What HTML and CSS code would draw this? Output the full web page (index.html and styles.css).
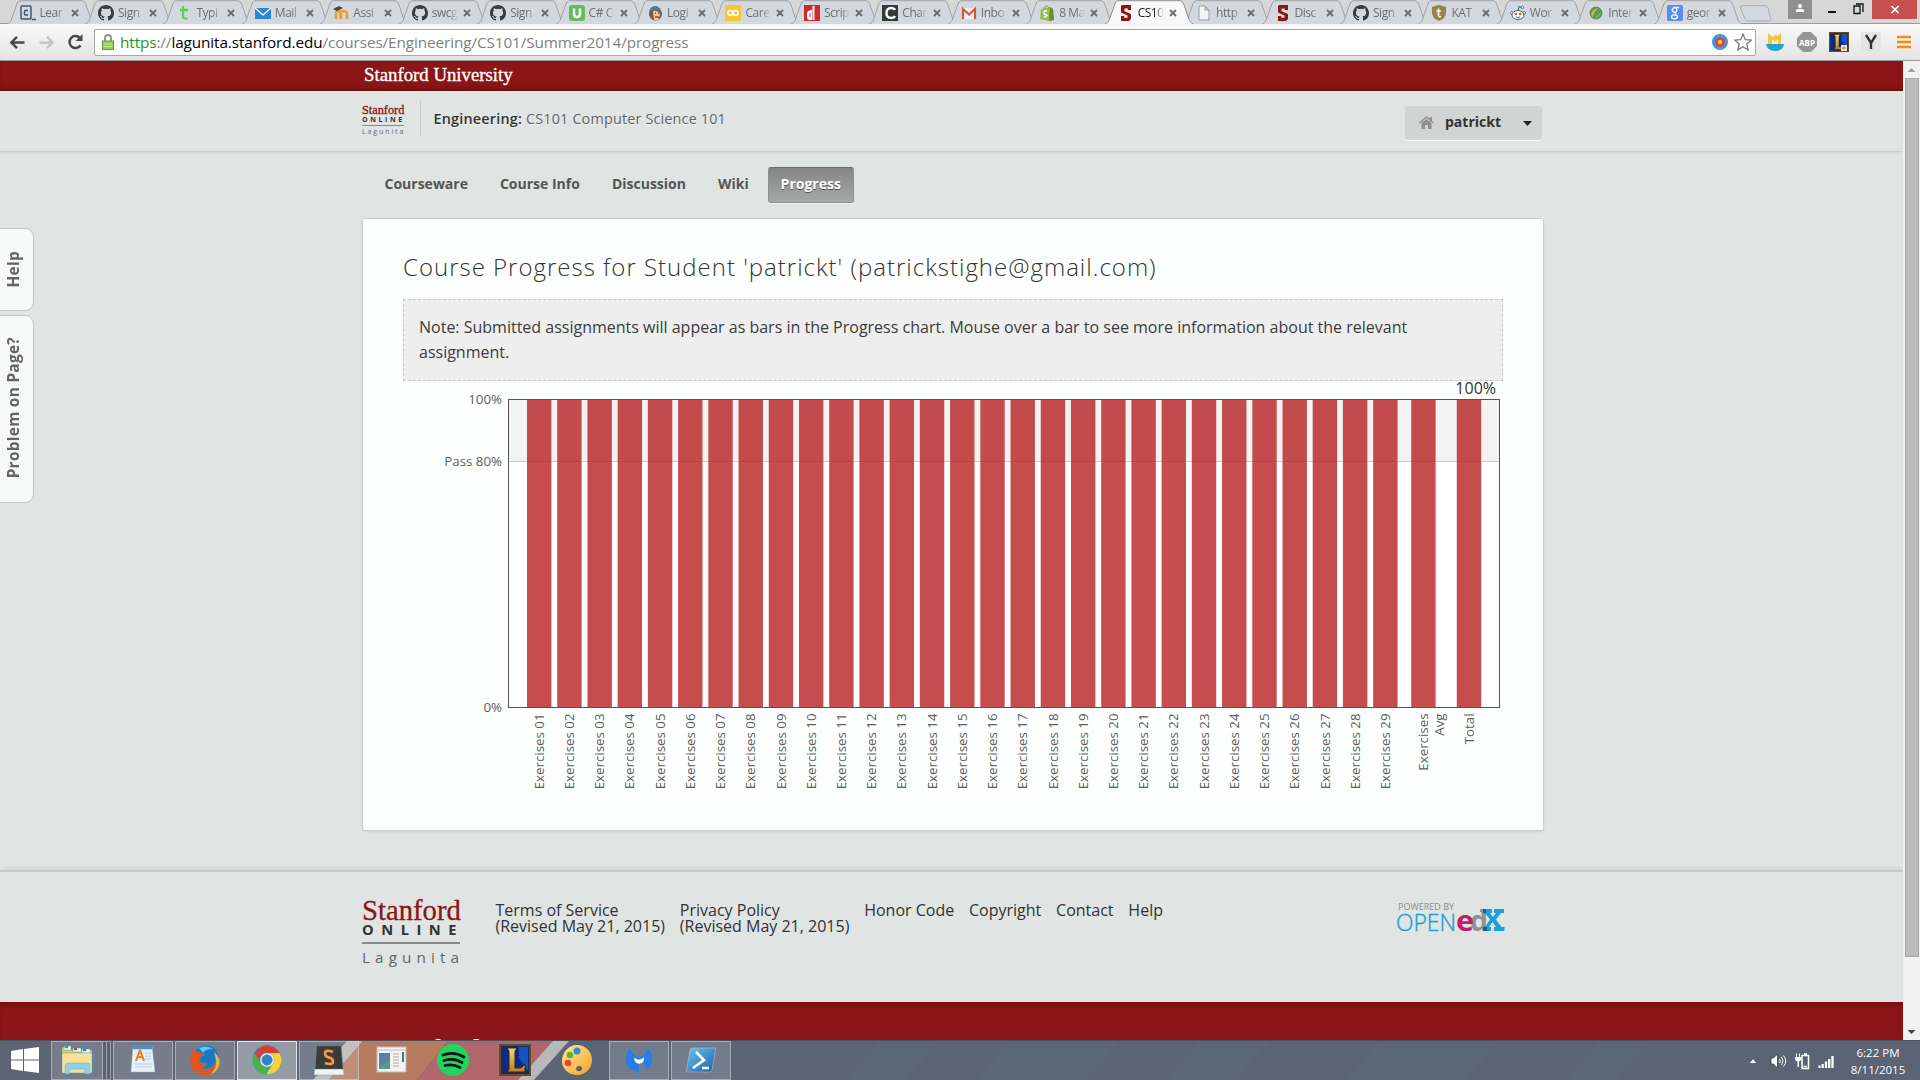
FILE: index.html
```html
<!DOCTYPE html>
<html lang="en">
<head>
<meta charset="utf-8">
<title>CS101 Progress</title>
<link rel="stylesheet" href="styles.css">
</head>
<body>
<svg class="defs" aria-hidden="true">
  <defs>
    <linearGradient id="gold" x1="0" y1="0" x2="0" y2="1"><stop offset="0" stop-color="#f3d77a"/><stop offset="1" stop-color="#b9812a"/></linearGradient>
    <linearGradient id="palette-fill" x1="0" y1="0" x2="1" y2="1"><stop offset="0" stop-color="#ffe9a0"/><stop offset="1" stop-color="#f3a21f"/></linearGradient>
    <linearGradient id="ps-fill" x1="0" y1="0" x2="1" y2="1"><stop offset="0" stop-color="#6fc0ea"/><stop offset="1" stop-color="#1766a8"/></linearGradient>
    <symbol id="tab" viewBox="0 0 89 24"><path d="M0 24C3 23 4 21 5 18L9.500 5C10.500 2 11.500 .7 14 .7H74C77 .7 78 2 79 5L83.500 18C84.500 21 85.500 23 88.500 24"/></symbol>
    <symbol id="close" viewBox="0 0 8 8"><path d="M1 1L7 7M7 1L1 7" fill="none" stroke="#6b6b6b" stroke-width="1.800"/></symbol>
    <symbol id="github" viewBox="0 0 16 16"><path fill="#3b3b3b" d="M8 0C3.580 0 0 3.580 0 8c0 3.540 2.290 6.530 5.470 7.590.4.070.55-.17.55-.38v-1.490c-2.010.37-2.530-.49-2.690-.94-.09-.23-.48-.94-.82-1.130-.28-.15-.68-.52-.01-.53.63-.01 1.080.58 1.230.82.72 1.210 1.870.87 2.330.66.070-.52.28-.87.510-1.070-1.780-.2-3.640-.89-3.640-3.950 0-.87.31-1.590.82-2.150-.08-.2-.36-1.020.080-2.120 0 0 .67-.21 2.200.82a7.600 7.600 0 0 1 4 0c1.530-1.040 2.200-.82 2.200-.82.440 1.100.160 1.920.080 2.120.51.560.82 1.270.82 2.150 0 3.070-1.870 3.750-3.650 3.950.29.25.54.73.54 1.480v2.200c0 .21.150.46.550.38A8 8 0 0 0 16 8c0-4.420-3.580-8-8-8z"/></symbol>
    <symbol id="stanford" viewBox="0 0 16 16"><path fill="#8c1515" d="M4 0h9v5H9.800V3.500H6.500v2.800L13 9v5l-2 2H3v-5h3.200v1.700h3.300V10.500L3 7.500V1z"/></symbol>
    <symbol id="league" viewBox="0 0 32 32"><rect width="32" height="32" fill="#6b4a16"/><rect x="2" y="2" width="28" height="28" fill="#0a2a86"/><path d="M20 3h9v24L20 14z" fill="#1553c4"/><path d="M8 4h10l-2 3v17h6l4-4v8H8l2-3V7z" fill="url(#gold)" stroke="#3a2606"/></symbol>
  </defs>
</svg>

<header class="tabstrip">
  <div class="tabs">
    <div class="tab"><svg class="shape"><use href="#tab"/></svg><svg class="fav" viewBox="0 0 16 16"><rect x="1" y="1" width="10" height="13" rx="1" fill="none" stroke="#3f5a6b" stroke-width="1.500"/><path d="M8 5.500H5.500Q4.500 5.500 4.500 7v2q0 1 1 1H8M12 14.500h4" stroke="#3f5a6b" stroke-width="1.500" fill="none"/></svg><span>Lear</span><svg class="x"><use href="#close"/></svg></div>
    <div class="tab"><svg class="shape"><use href="#tab"/></svg><svg class="fav"><use href="#github"/></svg><span>Sign</span><svg class="x"><use href="#close"/></svg></div>
    <div class="tab"><svg class="shape"><use href="#tab"/></svg><svg class="fav" viewBox="0 0 16 16"><path d="M7 1v10.500q0 2.500 4.500 2M4 5h8" fill="none" stroke="#5fcf50" stroke-width="2.400"/></svg><span>Typi</span><svg class="x"><use href="#close"/></svg></div>
    <div class="tab"><svg class="shape"><use href="#tab"/></svg><svg class="fav" viewBox="0 0 16 16"><rect y="3" width="16" height="11" fill="#2e86cf"/><path d="M0 3l8 7 8-7" fill="none" stroke="#fff" stroke-width="1.300"/></svg><span>Mail</span><svg class="x"><use href="#close"/></svg></div>
    <div class="tab"><svg class="shape"><use href="#tab"/></svg><svg class="fav" viewBox="0 0 16 16"><path d="M3 14V8q0-2 2-2t2.500 2v6M8 14V8q0-2 2.500-2T14 8v6" fill="none" stroke="#ef9b2d" stroke-width="2.600"/><path d="M0 4l6-3 4 2-6 3z" fill="#444"/></svg><span>Assi</span><svg class="x"><use href="#close"/></svg></div>
    <div class="tab"><svg class="shape"><use href="#tab"/></svg><svg class="fav"><use href="#github"/></svg><span>swcg</span><svg class="x"><use href="#close"/></svg></div>
    <div class="tab"><svg class="shape"><use href="#tab"/></svg><svg class="fav"><use href="#github"/></svg><span>Sign</span><svg class="x"><use href="#close"/></svg></div>
    <div class="tab"><svg class="shape"><use href="#tab"/></svg><svg class="fav" viewBox="0 0 16 16"><rect width="16" height="16" rx="3" fill="#62bb5d"/><path d="M5 3.500V9q0 3 3 3t3-3V3.500" fill="none" stroke="#fff" stroke-width="2.400"/></svg><span>C# C</span><svg class="x"><use href="#close"/></svg></div>
    <div class="tab"><svg class="shape"><use href="#tab"/></svg><svg class="fav" viewBox="0 0 16 16"><circle cx="8.500" cy="9" r="6.500" fill="#7a5844"/><path d="M6 6q6-1 7 4l-2 5H7z" fill="#e8c6a0"/><path d="M2 7Q3 0 10 1l4 3-8 1z" fill="#3c82b4"/><path d="M8 8h1M11 8h1M8 12h4" stroke="#3c281e"/></svg><span>Logi</span><svg class="x"><use href="#close"/></svg></div>
    <div class="tab"><svg class="shape"><use href="#tab"/></svg><svg class="fav" viewBox="0 0 16 16"><rect width="16" height="16" rx="1" fill="#f7c52d"/><circle cx="5.300" cy="8" r="2.400" fill="none" stroke="#fff" stroke-width="1.500"/><circle cx="10.700" cy="8" r="2.400" fill="none" stroke="#fff" stroke-width="1.500"/></svg><span>Care</span><svg class="x"><use href="#close"/></svg></div>
    <div class="tab"><svg class="shape"><use href="#tab"/></svg><svg class="fav" viewBox="0 0 16 16"><rect width="16" height="16" fill="#cf2a2a"/><path d="M9.500 1v14M6 6.500q-2 0-2 2.500v3q0 2 2 2h1V6z" stroke="#fff" stroke-width="2" fill="#fff"/><path d="M6 8v4" stroke="#cf2a2a"/></svg><span>Scrip</span><svg class="x"><use href="#close"/></svg></div>
    <div class="tab"><svg class="shape"><use href="#tab"/></svg><svg class="fav" viewBox="0 0 16 16"><rect width="16" height="16" fill="#333a38"/><path d="M13 5Q12 3 9 3 4.500 3 4.500 8T9 13q3 0 4-2" stroke="#fff" stroke-width="2.400" fill="none"/></svg><span>Char</span><svg class="x"><use href="#close"/></svg></div>
    <div class="tab"><svg class="shape"><use href="#tab"/></svg><svg class="fav" viewBox="0 0 16 16"><rect x="1" y="3" width="14" height="11" fill="#f0f0f0"/><path d="M2 14V4l6 5.500L14 4v10" stroke="#d65445" stroke-width="2.200" fill="none"/></svg><span>Inbo</span><svg class="x"><use href="#close"/></svg></div>
    <div class="tab"><svg class="shape"><use href="#tab"/></svg><svg class="fav" viewBox="0 0 16 16"><path d="M2 4l9-2 3 2 1 11-5 1-9-2z" fill="#95bf47"/><path d="M11 2l3 2 1 11-5 1z" fill="#5e8e3e"/><path d="M5 4q1-4 3-3t2 3" fill="none" stroke="#7aa63a"/><path d="M8 6Q5 5 5 7.500T7.500 10 5 12.500" stroke="#fff" stroke-width="1.400" fill="none"/></svg><span>8 Ma</span><svg class="x"><use href="#close"/></svg></div>
    <div class="tab active"><svg class="shape"><use href="#tab"/></svg><svg class="fav"><use href="#stanford"/></svg><span>CS10</span><svg class="x"><use href="#close"/></svg></div>
    <div class="tab"><svg class="shape"><use href="#tab"/></svg><svg class="fav" viewBox="0 0 16 16"><path d="M3 1h6l4 4v10H3zM9 1v4h4" fill="#f4f4f4" stroke="#999"/></svg><span>http</span><svg class="x"><use href="#close"/></svg></div>
    <div class="tab"><svg class="shape"><use href="#tab"/></svg><svg class="fav"><use href="#stanford"/></svg><span>Disc</span><svg class="x"><use href="#close"/></svg></div>
    <div class="tab"><svg class="shape"><use href="#tab"/></svg><svg class="fav"><use href="#github"/></svg><span>Sign</span><svg class="x"><use href="#close"/></svg></div>
    <div class="tab"><svg class="shape"><use href="#tab"/></svg><svg class="fav" viewBox="0 0 16 16"><path d="M1 2l3-1 4-1 4 1 3 1v6q0 5-7 8-7-3-7-8z" fill="#95834a"/><path d="M7.500 3.500v7q0 1.500 2.500 1M5.500 6H10" stroke="#fff" stroke-width="1.600" fill="none"/></svg><span>KAT</span><svg class="x"><use href="#close"/></svg></div>
    <div class="tab"><svg class="shape"><use href="#tab"/></svg><svg class="fav" viewBox="0 0 16 16"><rect width="16" height="16" fill="#c3dcf2"/><circle cx="2" cy="8" r="1.500" fill="#fff" stroke="#444" stroke-width=".6"/><circle cx="14" cy="8" r="1.500" fill="#fff" stroke="#444" stroke-width=".6"/><ellipse cx="8" cy="10" rx="6" ry="4.500" fill="#fff" stroke="#333" stroke-width=".8"/><circle cx="5.800" cy="9" r="1.300" fill="#f04a22"/><circle cx="10.200" cy="9" r="1.300" fill="#f04a22"/><path d="M8 5.500l1-4 3 1M6 12q2 1 4 0" stroke="#333" stroke-width=".8" fill="none"/><circle cx="12.500" cy="2.500" r="1.200" fill="#fff" stroke="#333" stroke-width=".6"/></svg><span>Wor</span><svg class="x"><use href="#close"/></svg></div>
    <div class="tab"><svg class="shape"><use href="#tab"/></svg><svg class="fav" viewBox="0 0 16 16"><circle cx="8" cy="8" r="6.500" fill="#4c9e5b"/><path d="M3 10Q5 3 11 3q-5 3-6 9zM6 13q6-1 7-6-3 4-7 6z" fill="#e8a94a"/></svg><span>Inter</span><svg class="x"><use href="#close"/></svg></div>
    <div class="tab"><svg class="shape"><use href="#tab"/></svg><svg class="fav" viewBox="0 0 16 16"><rect width="16" height="16" rx="1.500" fill="#5a8dee"/><circle cx="7.500" cy="5" r="2.300" fill="none" stroke="#fff" stroke-width="1.300"/><ellipse cx="7.500" cy="11.800" rx="3" ry="2" fill="none" stroke="#fff" stroke-width="1.300"/><path d="M8 7.500l1 2M8.500 2.500H12" stroke="#fff" stroke-width="1.300"/></svg><span>geor</span><svg class="x"><use href="#close"/></svg></div>
  </div>
  <svg class="newtab" viewBox="0 0 33 17"><path d="M4 .7h22q2 0 3 2l3 11q.5 2.300-2 2.300H9q-2 0-3-2L1.500 3Q1 .7 4 .7z" fill="#d3d8df" stroke="#a9acb0"/></svg>
  <div class="window-buttons">
    <svg class="person" viewBox="0 0 24 19"><rect width="24" height="19" fill="#8f8f8f"/><circle cx="12" cy="6" r="2" fill="#fff"/><path d="M8 12V10q4-2.500 8 0v2z" fill="#fff"/></svg>
    <svg class="minimize" viewBox="0 0 8 19"><path d="M0 12h8" stroke="#111" stroke-width="2"/></svg>
    <svg class="restore" viewBox="0 0 11 19"><path d="M1 6h6v7.500H1zM3 4h7v8" fill="none" stroke="#111" stroke-width="1.300"/></svg>
    <svg class="quit" viewBox="0 0 45 19"><rect width="45" height="19" fill="#c75050"/><path d="M19.500 6l7 7M26.500 6l-7 7" stroke="#fff" stroke-width="1.700"/></svg>
  </div>
</header>

<div class="toolbar">
  <svg class="nav-icon" viewBox="0 0 16 16"><path d="M16 8H2M8 2L2 8l6 6" fill="none" stroke="#484848" stroke-width="2.600"/></svg>
  <svg class="nav-icon fwd" viewBox="0 0 16 16"><path d="M0 8h14M8 2l6 6-6 6" fill="none" stroke="#c3c3c3" stroke-width="2.400"/></svg>
  <svg class="nav-icon reload" viewBox="0 0 16 16"><path d="M13 11.500A6 6 0 1 1 12.500 4" fill="none" stroke="#484848" stroke-width="2.500"/><path d="M15 0v7H8z" fill="#484848"/></svg>
  <div class="omnibox">
    <svg class="lock" viewBox="0 0 12 16"><path d="M3 8V4q0-3 3-3t3 3v4" fill="none" stroke="#8b8b8b" stroke-width="1.800"/><rect x=".5" y="7" width="11" height="8.500" fill="#8fd45c" stroke="#5a9d33"/><path d="M2 10h8M2 12.500h8" stroke="#b8ea93"/></svg>
    <span class="url"><b>https</b>://<em>lagunita.stanford.edu</em>/courses/Engineering/CS101/Summer2014/progress</span>
    <svg class="target" viewBox="0 0 16 16"><circle cx="8" cy="8" r="8" fill="#3f98e0"/><circle cx="8" cy="8" r="5" fill="#e0463c"/><circle cx="8" cy="8" r="2" fill="#ffe43b"/></svg>
    <svg class="star" viewBox="0 0 18 18"><path d="M9 1l2.300 5.700 6 .4-4.600 3.900 1.500 6L9 13.700 3.800 17l1.500-6L.7 7.100l6-.4z" fill="#fff" stroke="#757575" stroke-width="1.200"/></svg>
  </div>
  <div class="extensions">
    <svg viewBox="0 0 20 20"><path d="M3 12V1l4.500 4L10 3l2.500 1L16 1v11z" fill="#f8c33a"/><path d="M7 12V7.500l3 2 3-2V12z" fill="#fff3cf"/><path d="M1 12h18q-1 7-9 7t-9-7z" fill="#1fa5d5"/></svg>
    <svg viewBox="0 0 20 20"><path d="M6 0h8l6 6v8l-6 6H6l-6-6V6z" fill="#969696"/><text x="10" y="13.500" class="abp">ABP</text></svg>
    <svg viewBox="0 0 20 20"><use href="#league"/><rect x="12" y="13" width="6" height="6" fill="#e9eef5"/><circle cx="15" cy="16" r="1.700" fill="#e98a58"/></svg>
    <svg viewBox="0 0 20 20"><rect width="20" height="20" fill="#e4e4e4"/><path d="M5 3l5 8 5-8M10 10v7" fill="none" stroke="#333" stroke-width="2.400"/></svg>
    <svg class="menu" viewBox="0 0 14 14"><path d="M0 2h14M0 7h14M0 12h14" stroke="#ef8f1a" stroke-width="2.600"/></svg>
  </div>
</div>

<div class="viewport">
  <div class="page">
    <div class="brandbar"><span class="su">Stanford University</span></div>
    <div class="course-header">
      <div class="logo small"><i>Stanford</i><b>ONLINE</b><hr><span>Lagunita</span></div>
      <div class="course-name"><strong>Engineering:</strong> CS101 Computer Science 101</div>
      <div class="user">
        <svg class="home" viewBox="0 0 15 13"><path d="M7.500 0L0 6.500l1 1L7.500 2l6.500 5.500 1-1-2-1.800V1h-2v1.800z"/><path d="M7.500 3L2.500 7.300V13H6V9h3v4h3.500V7.300z"/></svg>
        <span>patrickt</span>
        <svg class="caret" viewBox="0 0 9 5"><path d="M0 0h9L4.500 5z"/></svg>
      </div>
    </div>
    <nav class="course-nav"><a>Courseware</a><a>Course Info</a><a>Discussion</a><a>Wiki</a><a class="current">Progress</a></nav>
    <main class="card">
      <h1>Course Progress for Student 'patrickt' (patrickstighe@gmail.com)</h1>
      <p class="note">Note: Submitted assignments will appear as bars in the Progress chart. Mouse over a bar to see more information about the relevant assignment.</p>
      <svg id="chart" class="chart" width="1100" height="430" viewBox="403 381 1100 430"></svg>
    </main>
    <footer class="footer">
      <div class="logo large"><i>Stanford</i><b>ONLINE</b><hr><span>Lagunita</span></div>
      <div class="links">
        <a>Terms of Service<br>(Revised May 21, 2015)</a><a>Privacy Policy<br>(Revised May 21, 2015)</a><a>Honor Code</a><a>Copyright</a><a>Contact</a><a>Help</a>
      </div>
      <svg class="edx" viewBox="0 0 108 30">
        <text x="1" y="7" class="pow" textLength="56" lengthAdjust="spacingAndGlyphs">POWERED BY</text>
        <text x="-1" y="28" class="open" textLength="60" lengthAdjust="spacingAndGlyphs">OPEN</text>
        <text x="73" y="28" class="ed d" textLength="18" lengthAdjust="spacingAndGlyphs">d</text>
        <text x="59" y="28" class="ed e" textLength="18" lengthAdjust="spacingAndGlyphs">e</text>
        <path d="M86 6h9v4h-2l3 4 3-4h-2V6h10v4h-3l-5 6.500 5.500 7.500h3v4H97v-4h2l-3.500-5-3.500 5h2v4h-8v-4h2l5-7.500L88 10h-2z" fill="#1f9fd8"/>
        <path d="M83 6h4v3h-4z" fill="#8f9194"/><path d="M86 6h3v4h-3zM86 24h4v4h-4z" fill="#1a5e96"/>
      </svg>
    </footer>
    <div class="bottombar"><span>Stanford</span></div>
    <aside class="side-tabs"><div class="help"><span>Help</span></div><div class="problem"><span>Problem on Page?</span></div></aside>
  </div>
  <div class="scrollbar">
    <svg viewBox="0 0 17 17"><path d="M4.500 11h8l-4-4z" fill="#a0a0a0"/></svg>
    <div class="thumb"></div>
    <svg class="down" viewBox="0 0 17 17"><path d="M4.500 7h8l-4 4z" fill="#444"/></svg>
  </div>
</div>

<div class="taskbar">
  <svg class="wallpaper" viewBox="0 0 1920 40" preserveAspectRatio="none">
    <rect width="1920" height="40" fill="#5a6475"/>
    <path d="M0 0h300l-35 40H0z" fill="#5c6474"/>
    <path d="M347 0h16l-35 40h-16z" fill="#b9b4b1"/>
    <path d="M363 0h85l-32 40h-88z" fill="#b67a5e"/>
    <path d="M448 0h105l-36 40H416z" fill="#b0666b"/>
    <path d="M553 0h16l-36 40h-16z" fill="#b9b8b8"/>
    <path d="M880 0h60l-35 40h-60zM1010 0h110l-35 40H975zM1200 0h70l-35 40h-70zM1380 0h120l-35 40h-120zM1600 0h50l-35 40h-50z" fill="#59687b" opacity=".8"/>
  </svg>
  <div class="task start"><svg viewBox="0 0 28 26"><path d="M0 4l12-2v10.500H0zM13 1.900L28 0v12.500H13zM0 13.500h12V24L0 22zM13 13.500h15V26l-15-2z" fill="#fff"/></svg></div>
  <div class="task open explorer"><svg viewBox="0 0 32 32"><path d="M1 3h8l1 3h21v23H1z" fill="#e9c765"/><path d="M3 2h7v4H3zM12 4h8v4h-8zM21 5h8v4h-8z" fill="#f8f8f2"/><path d="M4 2h3v2H4z" fill="#45a83f"/><path d="M13 4h3v2h-3z" fill="#c03a30"/><path d="M22 5h3v2h-3z" fill="#3a78c8"/><path d="M1 9h30v20H1z" fill="#f7e296"/><path d="M4 30V22q0-3 3-3h19q3 0 3 3v8h-5v-5H9v5z" fill="#8fd0ea" stroke="#58a3cc"/></svg></div><div class="stack"></div><div class="stack"></div>
  <div class="task open wordpad"><svg viewBox="0 0 32 32"><path d="M6 2h19l3 26H4z" fill="#e8f1fb" stroke="#8bb2dc"/><path d="M6 2h19v3H6z" fill="#4d8ed1"/><path d="M9 17l4-11 4 11M10.500 13h5" fill="none" stroke="#ef7f1a" stroke-width="2"/><path d="M18 9h6M18 12h6M18 15h6M8 20h17M8 23h17" stroke="#5b93cf"/></svg></div>
  <div class="task open firefox"><svg viewBox="0 0 32 32"><circle cx="17" cy="14.500" r="13" fill="#1c76c4"/><path d="M10 4q8-3 14 1-8 0-10 4z" fill="#67c7f0"/><path d="M3 5q2 3 6 3 4 0 7 3-5 1-6 5 2 4 8 3-1 5-7 4 6 4 12 0 6-5 2-15 6 5 6 11-1 12-14 13Q3 31 1 19 1 10 3 5z" fill="#e2551b"/><path d="M25 8q6 5 6 11-2 9-10 12 7-7 6-15z" fill="#f8b42f"/></svg></div>
  <div class="task open front chrome"><svg viewBox="0 0 32 32"><circle cx="16" cy="16" r="14.500" fill="#4db149"/><path d="M16 16L3.500 8.700A14.500 14.500 0 0 1 28.600 8.900z" fill="#de3b2f"/><path d="M16 9h12.800A14.500 14.500 0 0 1 15 30.500L22 19z" fill="#fbd235"/><path d="M3.500 8.700L10 19l6-10z" fill="#de3b2f"/><circle cx="16" cy="16" r="7" fill="#fff"/><circle cx="16" cy="16" r="5.400" fill="#3b7fc4"/></svg></div>
  <div class="task open sublime"><svg viewBox="0 0 32 32"><path d="M4 5h24l3 26H1z" fill="#f2f2f2"/><path d="M4 2h24l2 23H2z" fill="#3b3b3b" stroke="#666"/><path d="M20 8q-8-3-8 1.500 0 3 4 4t4 4q0 4-8 1.500" fill="none" stroke="#ff9a3c" stroke-width="2.600"/></svg></div>
  <div class="task generic"><svg viewBox="0 0 32 32"><rect x="2" y="3" width="29" height="25" fill="#f4f4f4" stroke="#bbb"/><path d="M2 6h29" stroke="#bbc"/><rect x="4" y="9" width="11" height="16" fill="#579a82"/><path d="M4 9h11v7l-11 7z" fill="#5b80a8"/><path d="M18 10h6M18 13h6M18 16h6M18 19h6M18 22h6" stroke="#aaa"/><path d="M28 8v10" stroke="#3a7e6a" stroke-width="2"/></svg></div>
  <div class="task spotify"><svg viewBox="0 0 32 32"><circle cx="16" cy="16" r="16" fill="#1ed760"/><path d="M6 11q11-4 21 2M7 16.500q10-3 18 2M8 21.500q8-2 15 2" fill="none" stroke="#191414" stroke-width="2.800" stroke-linecap="round"/></svg></div>
  <div class="task lol"><svg viewBox="0 0 32 32"><use href="#league"/></svg></div>
  <div class="task paint"><svg viewBox="0 0 32 32"><path d="M16 1c9 0 15 7 15 15S25 31 16 31C8 31 1 25 1 17S7 1 16 1zm2 21a3 2.600 0 1 0 .1 0z" fill="url(#palette-fill)" fill-rule="evenodd"/><circle cx="16" cy="7" r="3.500" fill="#2d8fd0"/><circle cx="9" cy="11" r="3.300" fill="#5cb82e"/><circle cx="7" cy="19" r="3.300" fill="#e8432e"/></svg></div>
  <div class="task open mbam"><svg viewBox="0 0 32 32"><path d="M7 4q3 7 9 10 6-3 9-10 6 6 4 14-2 6-6 8l-3-9-4 4v8Q6 27 3 19 1 10 7 4z" fill="#2e7be0"/><path d="M11 13q5 5 10 0 1 6-5 7-5-1-5-7z" fill="#fff"/></svg></div>
  <div class="task open powershell"><svg viewBox="0 0 32 32"><path d="M7 4h22q2 0 1.500 2L27 26q-.5 2-2.500 2H3q-2 0-1.500-2L5 6q.5-2 2-2z" fill="url(#ps-fill)" stroke="#bfe0f5"/><path d="M11 8l8 8-11 8M17 24h7" fill="none" stroke="#fff" stroke-width="2.600"/></svg></div>
  <div class="tray">
    <svg class="up" viewBox="0 0 10 8"><path d="M1 6.500h8L5 1.500z" fill="#f4f4f4" stroke="#333b48" stroke-width=".6"/></svg>
    <svg class="sound" viewBox="0 0 17 16"><path d="M1 5h2.500L7.500 1v14l-4-4H1z" fill="#fff" stroke="#333b48" stroke-width=".8"/><path d="M9.500 6q1.500 2 0 4M11.500 4q3 4 0 8M13.500 2.500q4.500 5.500 0 11" fill="none" stroke="#fff"/></svg>
    <svg class="battery" viewBox="0 0 17 18"><path d="M9 3.500h5.500v13H8V3.500zM10 2h3" fill="none" stroke="#fff" stroke-width="1.500"/><path d="M1 5h6v3L5 9.500V15H3.500V9.500L1 8z" fill="#fff"/><path d="M2.500 5V1.500M5.500 5V1.500" stroke="#fff"/><path d="M9.500 14.500h3.500" stroke="#fff" stroke-width="1.500"/></svg>
    <svg class="signal" viewBox="0 0 17 14"><path d="M1.500 14v-2.500M4.700 14V10M8 14V7.500M11.200 14V5M14.500 14V2" stroke="#fff" stroke-width="2.300"/></svg>
    <div class="clock"><div>6:22 PM</div><div>8/11/2015</div></div>
  </div>
</div>
<script src="app.js"></script>
</body>
</html>
```
FILE: styles.css
```css
* { box-sizing: border-box; }
html, body { margin: 0; height: 100%; }
body { width: 1920px; height: 1080px; overflow: hidden; display: flex; flex-direction: column; font-family: "Open Sans", sans-serif; background: #e0e4e3; }
svg { display: block; flex: none; }
.defs { position: absolute; width: 0; height: 0; }

/* Browser chrome */
.tabstrip { height: 24px; flex: none; display: flex; background: #d7d7d7; border-bottom: 1px solid #9c9c9c; padding-left: 6.5px; }
.tabs { display: flex; flex: none; height: 24px; }
.tab { position: relative; width: 78.45px; height: 24px; flex: none; display: flex; align-items: center; padding: 2px 0 0 13px; font: 12px/16px "Open Sans", sans-serif; letter-spacing: -.45px; color: #6d7074; }
.tab .shape { position: absolute; left: 0; top: 0; width: 89px; height: 24px; fill: #d3d8df; stroke: #9fa1a5; }
.tab.active { z-index: 2; color: #222; }
.tab.active .shape { fill: #f8f8f8; stroke: #8f8f8f; }
.tab .fav { position: relative; width: 16px; height: 16px; margin-right: 4px; }
.tab span { position: relative; width: 26px; white-space: nowrap; -webkit-mask-image: linear-gradient(90deg, #000 65%, transparent); mask-image: linear-gradient(90deg, #000 65%, transparent); }
.tab .x { position: relative; width: 8px; height: 8px; margin-left: 5px; }
.newtab { width: 33px; height: 17px; margin: 5px 0 0 7px; }
.window-buttons { display: flex; margin-left: auto; padding-right: 3px; }
.window-buttons svg { height: 19px; }
.person { width: 24px; margin-right: 16px; }
.minimize { width: 8px; margin-right: 17px; }
.restore { width: 11px; margin-right: 8px; }
.quit { width: 45px; }
.toolbar { height: 37px; flex: none; display: flex; align-items: center; background: linear-gradient(#f9f9f9, #e3e3e3); border-bottom: 1px solid #9a9a9a; padding: 0 9px 0 9px; }
.nav-icon { width: 16px; height: 15px; }
.nav-icon.fwd { margin-left: 14px; }
.nav-icon.reload { margin: 0 10px 0 12px; width: 17px; height: 16px; }
.omnibox { width: 1664px; height: 27px; border: 1px solid #a8a8a8; border-radius: 2px; background: #fff; display: flex; align-items: center; padding: 0 3px 0 7px; }
.lock { width: 12px; height: 16px; margin-right: 6px; }
.url { font-size: 15.3px; letter-spacing: -.1px; color: #808080; line-height: 24px; white-space: nowrap; }
.url b { font-weight: 400; color: #1e931e; }
.url em { font-style: normal; color: #000; }
.target { width: 16px; height: 16px; margin-left: auto; }
.star { width: 18px; height: 18px; margin-left: 6px; }
.extensions { display: flex; align-items: center; gap: 12px; margin-left: 9px; }
.extensions svg { width: 20px; height: 20px; }
.extensions .menu { width: 14px; height: 14px; margin-left: 4px; }
.abp { font: bold 8px "Open Sans", sans-serif; fill: #fff; text-anchor: middle; }

/* Page */
.viewport { height: 979px; flex: none; display: flex; }
.page { width: 1903px; height: 979px; position: relative; display: flex; flex-direction: column; overflow: hidden; background: #e0e4e3; }
.brandbar { height: 30px; flex: none; background: #8c1515; box-shadow: inset 0 -4px 5px -2px rgba(60,0,0,.45); padding-left: 364px; color: #fff; font: 18.8px/28px "Liberation Serif", serif; -webkit-text-stroke: .35px #fff; white-space: nowrap; }
.course-header { height: 61px; flex: none; display: flex; align-items: flex-start; border-bottom: 1px solid #c9cdcc; box-shadow: 0 1px 3px rgba(0,0,0,.08); padding: 10px 361px 0 362px; }
.logo { font-style: normal; flex: none; white-space: nowrap; }
.logo i, .logo b, .logo span { display: block; font-style: normal; }
.logo i { font-family: "Liberation Serif", serif; color: #8c1515; -webkit-text-stroke: .3px #8c1515; }
.logo b { color: #333; font-weight: 700; }
.logo span { color: #666; }
.logo hr { margin: 0; border: 0; background: #888; }
.logo.small { width: 59px; height: 35px; border-right: 1px solid #c8cccb; padding-top: 3px; }
.small i { font-size: 12.3px; line-height: 13px; }
.small b { font-size: 7px; line-height: 7px; letter-spacing: 2.6px; margin-top: -1px; }
.small hr { width: 42px; height: 1px; margin-top: 2px; }
.small span { font-size: 7px; line-height: 9px; letter-spacing: 1.900px; padding-top: 1px; }
.course-name { font-size: 14.4px; line-height: 20px; color: #646464; letter-spacing: .17px; margin: 8px 0 0 12.5px; text-shadow: 0 1px rgba(255,255,255,.6); white-space: nowrap; }
.course-name strong { color: #333; font-weight: 600; letter-spacing: .2px; }
.user { width: 137px; height: 34px; margin: 5px 0 0 auto; background: #d1d4d3; border-radius: 3px; box-shadow: 0 1px #fafafa; display: flex; align-items: center; padding: 0 10px 3px 14px; font-size: 14px; line-height: 20px; font-weight: 700; color: #333; }
.home { width: 15px; height: 13px; margin: 1px 11px 0 0; fill: #8f8f8f; }
.caret { width: 9px; height: 5px; margin: 4px 0 0 auto; fill: #222; }
.course-nav { height: 66px; flex: none; display: flex; align-items: flex-start; padding: 15px 0 0 371.5px; }
.course-nav a { height: 36px; line-height: 34px; padding: 0 13px; margin-right: 6px; font-size: 14px; font-weight: 700; color: #555; white-space: nowrap; border-radius: 3px; }
.course-nav .current { width: 86px; color: #fff; background: linear-gradient(#858585, #a6a8a7); border: 1px solid #8f9190; border-top-color: #6d6d6d; box-shadow: 0 1px #f4f4f4; line-height: 32px; padding: 0; text-align: center; text-shadow: 0 1px #555; }
.card { width: 1182px; height: 613px; flex: none; margin-left: 362px; border: 1px solid #cccfce; border-radius: 3px; background: #fdfffe; padding: 30px 40px; box-shadow: 0 1px 2px rgba(0,0,0,.08); }
.card h1 { margin: 0; font-size: 24px; line-height: 36px; font-weight: 300; letter-spacing: 1px; color: #333; white-space: nowrap; }
.note { margin: 14px 0 0; height: 82px; border: 1px dashed #c8c8c8; background: #eee; padding: 15px; font-size: 16px; line-height: 25px; color: #3c3c3c; }
.chart { overflow: visible; }
.chart text { font-size: 13.3px; fill: #5c5c5c; }
.chart .total { font-size: 16px; fill: #333; }
.footer { height: 132px; flex: none; margin-top: 39px; border-top: 2px solid #c5c9c8; box-shadow: 0 -3px 4px -1px rgba(0,0,0,.06); display: flex; align-items: flex-start; padding: 0 0 0 362px; }
.logo.large { width: 133.5px; padding-top: 23px; }
.large i { font-size: 28.700px; line-height: 30px; }
.large b { font-size: 14.7px; line-height: 16px; letter-spacing: 7.5px; margin-top: -4px; }
.large hr { width: 98px; height: 2px; margin-top: 5px; }
.large span { font-size: 15.3px; line-height: 18px; letter-spacing: 5.1px; margin-top: 4px; }
.links { display: flex; gap: 14.8px; width: 901px; padding-top: 30px; font-size: 16px; line-height: 16px; color: #333; white-space: nowrap; }
.edx { width: 108px; height: 30px; margin-top: 31px; overflow: visible; }
.pow { font-size: 8.3px; fill: #8c8c8c; }
.open { font-size: 24px; font-weight: 300; fill: #1f9fd8; stroke: #1f9fd8; stroke-width: .4; }
.ed { font-size: 29px; font-weight: 700; }
.e { fill: #c02069; }
.d { fill: #8f9194; }
.bottombar { flex: 1; background: #8c1515; box-shadow: inset 0 4px 5px -2px rgba(60,0,0,.4); overflow: hidden; padding: 33px 0 0 380px; color: #fff; font: bold 26.5px/28px "Liberation Serif", serif; }
.side-tabs { position: absolute; left: 0; top: 167px; display: flex; flex-direction: column; gap: 4px; }
.side-tabs div { width: 34px; border: 1px solid #c3c6c5; border-left: 0; border-radius: 0 9px 9px 0; background: #f7f9f8; display: flex; justify-content: center; align-items: center; padding-right: 6px; }
.side-tabs span { writing-mode: vertical-rl; transform: rotate(180deg); font-size: 15.4px; line-height: 20px; font-weight: 700; color: #646464; white-space: nowrap; letter-spacing: .3px; }
.side-tabs .help { height: 83px; }
.side-tabs .problem { height: 188px; padding-bottom: 2px; }
.scrollbar { width: 17px; background: #f1f1f1; display: flex; flex-direction: column; align-items: center; }
.scrollbar svg { width: 17px; height: 17px; }
.thumb { width: 14px; height: 879px; background: #bcbcbc; border: 1px solid #a8a8a8; }
.scrollbar .down { margin-top: auto; }

/* Taskbar */
.taskbar { position: relative; height: 40px; flex: none; display: flex; align-items: center; border-top: 1px solid #4b4f5c; }
.wallpaper { position: absolute; left: 0; top: 0; width: 1920px; height: 40px; }
.task { position: relative; width: 60px; height: 39px; margin-right: 2px; flex: none; display: flex; align-items: center; justify-content: center; }
.task svg { width: 32px; height: 32px; margin-top: -1px; }
.task.open { background: rgba(255,255,255,.16); border: 1px solid rgba(220,224,232,.5); }
.task.front { background: rgba(255,255,255,.36); border-color: #e2e4e8; }
.task.start { width: 49px; }
.start svg { width: 28px; height: 26px; }
.task.explorer { width: 52px; margin-right: 0; }
.stack { position: relative; width: 4px; height: 39px; border: 1px solid rgba(220,224,232,.5); border-left: 0; }
.task.wordpad { margin-left: 2px; }
.tray { position: relative; margin-left: auto; display: flex; align-items: center; padding-right: 14px; }
.up { width: 10px; height: 8px; margin-right: 12px; }
.sound { width: 17px; height: 16px; margin-right: 7px; }
.battery { width: 17px; height: 18px; margin-right: 7px; }
.signal { width: 17px; height: 14px; margin-right: 15px; }
.clock { width: 56px; text-align: center; color: #fff; font-size: 11.5px; line-height: 17px; white-space: nowrap; }
```
FILE: app.js
```js
// Draws the course progress chart.
const NS = 'http://www.w3.org/2000/svg';
const chart = document.getElementById('chart');
const LEFT = 508.5, RIGHT = 1499.5, TOP = 399.5, BOTTOM = 707.5, BAR = 24.4;

function add(name, attrs, text) {
  const el = document.createElementNS(NS, name);
  for (const k in attrs) el.setAttribute(k, attrs[k]);
  if (text) el.textContent = text;
  chart.appendChild(el);
  return el;
}
function label(lines, x) {
  lines.forEach((line, i) => add('text', {
    transform: `translate(${x + i * 16} 713.5) rotate(-90)`, 'text-anchor': 'end'
  }, line));
}

const scores = [];
for (let i = 0; i < 29; i++) scores.push({ x: 527 + i * 30.22, value: 1, name: ['Exercises ' + String(i + 1).padStart(2, '0')] });
scores.push({ x: 1411.2, value: 1, name: ['Exercises', 'Avg'] });
scores.push({ x: 1456.8, value: 1, name: ['Total'] });

const height = BOTTOM - TOP, passY = 461.5;
add('rect', { x: LEFT, y: TOP, width: RIGHT - LEFT, height, fill: '#fff' });
add('rect', { x: LEFT, y: TOP, width: RIGHT - LEFT, height: passY - TOP, fill: '#f3f3f3' });
add('path', { d: `M${LEFT} ${passY}H${RIGHT}`, stroke: '#ccc' });
for (const s of scores) {
  add('rect', { x: s.x, y: BOTTOM - height * s.value, width: BAR, height: height * s.value, fill: '#b72121', 'fill-opacity': 0.8 });
  label(s.name, s.x + 16.8);
}
add('rect', { x: LEFT, y: TOP, width: RIGHT - LEFT, height, fill: 'none', stroke: '#545454' });
for (const [t, y] of [['100%', TOP], ['Pass 80%', passY], ['0%', BOTTOM]])
  add('text', { x: 502, y: y + 4.5, 'text-anchor': 'end' }, t);
add('text', { x: 1496, y: 393.5, 'text-anchor': 'end', class: 'total' }, '100%');
```
